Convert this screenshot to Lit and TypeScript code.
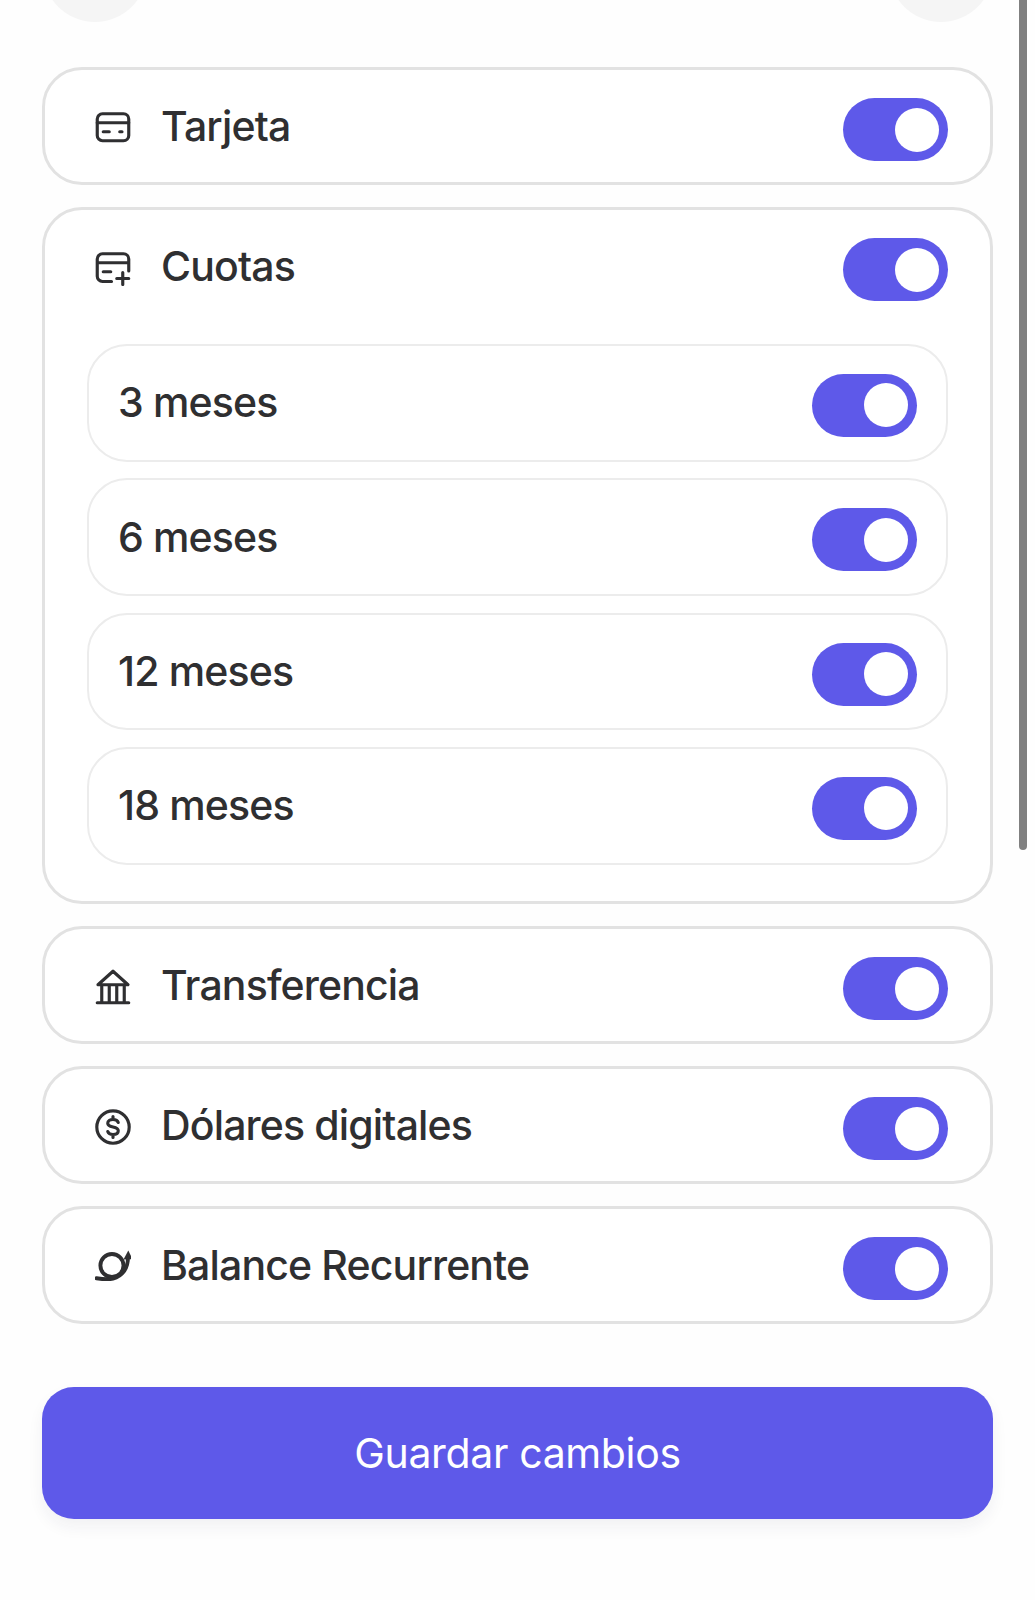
// app.ts - payment methods settings
import { LitElement, html, css, svg } from 'lit';
import { customElement, state } from 'lit/decorators.js';

const icons = {
  card: svg`<rect x="1.5" y="2.5" width="21" height="18" rx="3.5"/><path d="M1.5 8.5h21M5.5 14.5h4M16.5 14.5h1.5"/>`,
  cardPlus: svg`<path d="M11 21H5a3.5 3.5 0 0 1-3.5-3.5V6A3.5 3.5 0 0 1 5 2.5h14A3.500 3.500 0 0 1 22.500 6v8M1.500 8.500h21M5.500 14.500h5M14.500 19h8M18.500 15v8"/>`,
  bank: svg`<path d="M2 10.500 12 1.500l10 9zM1.500 22.500h21M4.500 10.500v12M9.500 10.500v12M14.500 10.500v12M19.500 10.500v12"/>`,
  dollar: svg`<circle cx="12" cy="12" r="10.800"/><path d="M15.500 9c-.4-1.200-1.700-2-3.500-2-2.100 0-3.500 1-3.500 2.500 0 3.500 7 1.500 7 5 0 1.500-1.400 2.500-3.500 2.500-1.800 0-3.100-.8-3.500-2M12 5v2M12 17v2"/>`,
  recurrent: svg`<circle cx="11.300" cy="11" r="7.700" stroke-width="2.600"/><path stroke-width="2.600" d="M1 19.500c4 .6 8 1 11 .2 6-1.500 10-6.500 10-14.200"/><path stroke="none" fill="currentColor" d="M22.200 1 25 6.800 19 7z"/>`,
};

@customElement('app-root')
export class AppRoot extends LitElement {
  @state() private enabled: Record<string, boolean> = {
    tarjeta: true,
    cuotas: true,
    m3: true,
    m6: true,
    m12: true,
    m18: true,
    transferencia: true,
    dolares: true,
    balance: true,
  };

  static override styles = css`
    :host {
      display: block;
      position: relative;
      height: 1600px;
      overflow: hidden;
      background: #fefefe;
      font-family: Inter, 'Liberation Sans', sans-serif;
      color: #2f2f31;
    }

    .page {
      padding: 0 42px;
      display: flex;
      flex-direction: column;
    }

    .top {
      height: 22px;
      overflow: hidden;
      display: flex;
      justify-content: space-between;
      align-items: flex-end;
      padding-left: 1px;
      margin-bottom: 45px;
    }

    .circle {
      width: 104px;
      height: 104px;
      flex: none;
      border-radius: 50%;
      background: #f5f5f5;
    }

    .list {
      display: flex;
      flex-direction: column;
      gap: 22px;
    }

    .card {
      border: 3px solid #e2e2e2;
      border-radius: 40px;
      background: #fff;
    }

    .row {
      box-sizing: border-box;
      height: 112px;
      padding: 7px 42px 0 50px;
      display: flex;
      align-items: center;
      justify-content: space-between;
    }

    .label {
      display: flex;
      align-items: center;
      gap: 30px;
      font-size: 41px;
      font-weight: 500;
      letter-spacing: -0.85px;
      line-height: 50px;
      position: relative;
      top: -4px;
    }

    .icon {
      width: 36px;
      height: 36px;
      flex: none;
      fill: none;
      stroke: currentColor;
      stroke-width: 2.1;
      stroke-linecap: round;
      stroke-linejoin: round;
      position: relative;
      top: 2px;
    }

    .subs {
      display: flex;
      flex-direction: column;
      gap: 16.8px;
      padding: 22px 42px 36.5px 42px;
    }

    .sub {
      box-sizing: border-box;
      height: 117.6px;
      border: 2px solid #ececec;
      border-radius: 40px;
      padding: 5px 29px 0 29px;
      display: flex;
      align-items: center;
      justify-content: space-between;
    }

    .sub .label {
      top: -3px;
    }

    .toggle {
      width: 105px;
      height: 63px;
      flex: none;
      border: none;
      border-radius: 32px;
      background: #cfcfd4;
      padding: 0 9px 0 0;
      display: flex;
      align-items: center;
      justify-content: flex-start;
      cursor: pointer;
    }

    .toggle.on {
      background: #5e59e9;
      justify-content: flex-end;
    }

    .toggle.off {
      padding: 0 0 0 9px;
    }

    .knob {
      width: 44px;
      height: 44px;
      border-radius: 50%;
      background: #fff;
    }

    .save {
      margin-top: 62.7px;
      height: 132px;
      border: none;
      border-radius: 32px;
      background: #5e59e9;
      color: #fff;
      font-family: inherit;
      font-size: 41px;
      letter-spacing: -0.35px;
      box-shadow: 0 8px 16px rgba(30, 30, 60, 0.06);
      cursor: pointer;
    }

    .scrollbar {
      position: absolute;
      top: -8px;
      right: 8px;
      width: 8px;
      height: 858px;
      border-radius: 4px;
      background: #808080;
    }
  `;

  private toggle(key: string) {
    this.enabled = { ...this.enabled, [key]: !this.enabled[key] };
  }

  private renderToggle(key: string) {
    const on = this.enabled[key];
    return html`
      <button
        class="toggle ${on ? 'on' : 'off'}"
        role="switch"
        aria-checked=${on ? 'true' : 'false'}
        @click=${() => this.toggle(key)}
      >
        <span class="knob"></span>
      </button>
    `;
  }

  private renderRow(key: string, icon: unknown, text: string) {
    return html`
      <div class="row">
        <span class="label">
          <svg class="icon" viewBox="0 0 24 24">${icon}</svg>
          ${text}
        </span>
        ${this.renderToggle(key)}
      </div>
    `;
  }

  private renderSub(key: string, text: string) {
    return html`
      <div class="sub">
        <span class="label">${text}</span>
        ${this.renderToggle(key)}
      </div>
    `;
  }

  override render() {
    return html`
      <div class="page">
        <div class="top">
          <span class="circle"></span>
          <span class="circle"></span>
        </div>
        <div class="list">
          <div class="card">${this.renderRow('tarjeta', icons.card, 'Tarjeta')}</div>
          <div class="card">
            ${this.renderRow('cuotas', icons.cardPlus, 'Cuotas')}
            <div class="subs">
              ${this.renderSub('m3', '3 meses')} ${this.renderSub('m6', '6 meses')}
              ${this.renderSub('m12', '12 meses')} ${this.renderSub('m18', '18 meses')}
            </div>
          </div>
          <div class="card">${this.renderRow('transferencia', icons.bank, 'Transferencia')}</div>
          <div class="card">${this.renderRow('dolares', icons.dollar, 'Dólares digitales')}</div>
          <div class="card">${this.renderRow('balance', icons.recurrent, 'Balance Recurrente')}</div>
        </div>
        <button class="save">Guardar cambios</button>
      </div>
      <div class="scrollbar"></div>
    `;
  }
}
